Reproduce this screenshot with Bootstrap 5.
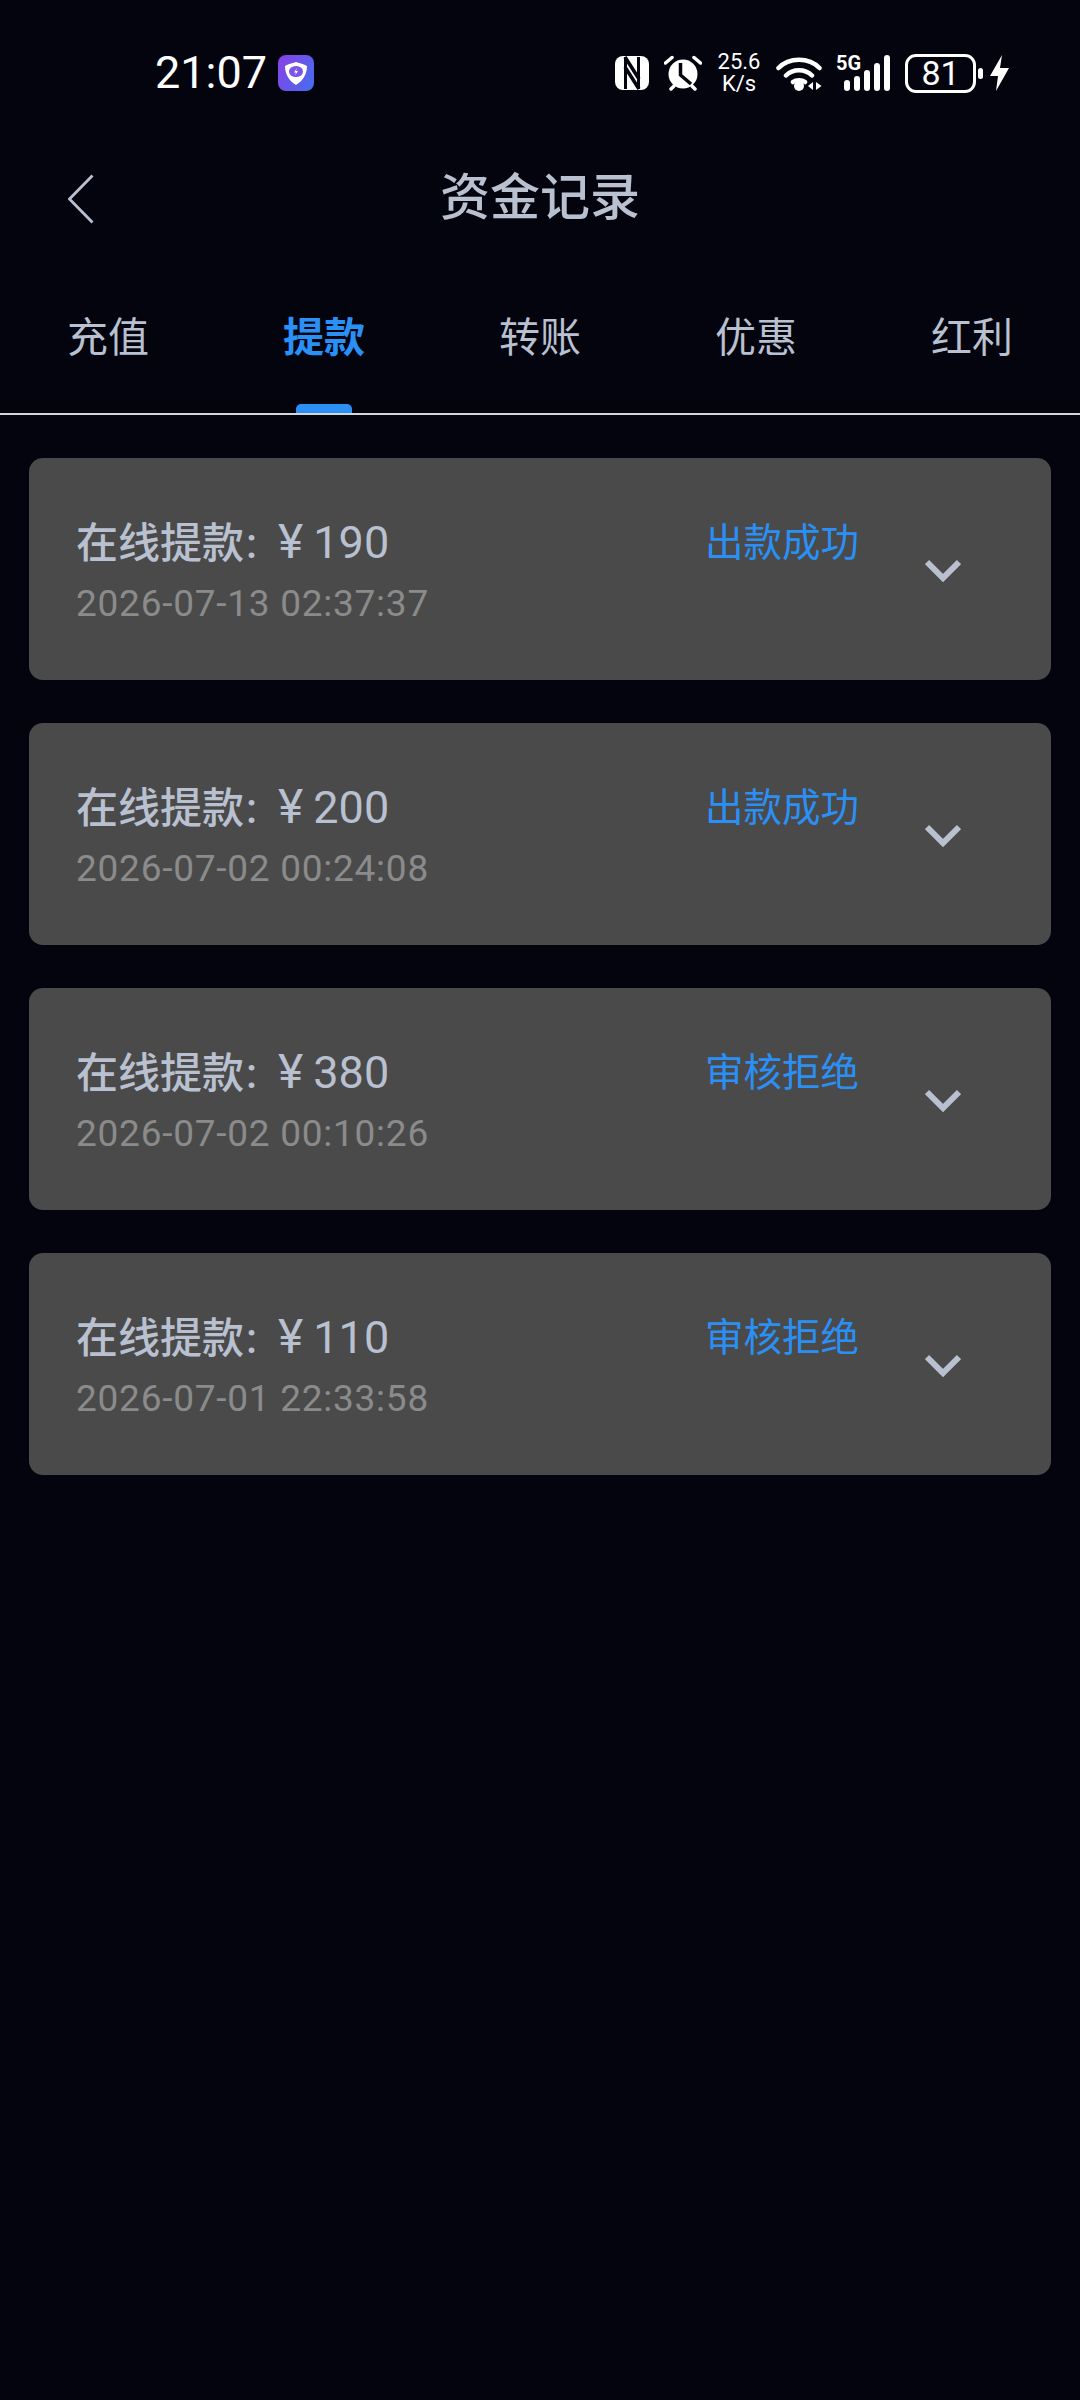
<!DOCTYPE html>
<html lang="zh-CN">
<head>
  <meta charset="UTF-8">
  <meta name="viewport" content="width=device-width, initial-scale=1.0">
  <title>资金记录</title>
  <link rel="stylesheet" href="https://cdn.jsdelivr.net/npm/bootstrap@5.3.2/dist/css/bootstrap.min.css">
  <style>
    body { background: #03040e; font-family: Roboto, "Noto Sans CJK SC", sans-serif; color: #b9c0d0; min-height: 2400px; }
    .status-bar { height: 146px; padding: 0 71px 0 155px; color: #fff; }
    .status-time { font-size: 45px; line-height: 52px; margin-right: 11px; }
    .app-badge { width: 36px; height: 36px; border-radius: 8px; background: linear-gradient(120deg, #8b3fe6, #4270ee); }
    .speed { width: 46px; font-size: 22px; line-height: 22px; text-align: center; white-space: nowrap; }
    .signal-5g { left: 0; top: -3px; font-size: 20px; line-height: 22px; font-weight: 700; }
    .batt { width: 71px; height: 39px; border: 3px solid #fff; border-radius: 11px; font-size: 34px; line-height: 1; }
    .batt-tip { width: 5px; height: 11px; background: #fff; border-radius: 3px; margin-left: 2px; }
    .top-nav { height: 104px; }
    .nav-title { font-size: 50px; font-weight: 500; line-height: 60px; }
    .tabs { height: 165px; border-bottom: 2px solid #d4d6dc; }
    .tab-item { width: 216px; padding-top: 60px; font-size: 41px; line-height: 56px; }
    .tab-item.active { color: #2a90f5; font-weight: 700; }
    .tab-bar { width: 56px; height: 9px; margin-top: 38px; border-radius: 5px 5px 0 0; background: #2a90f5; }
    .records { padding: 43px 29px 0 29px; gap: 43px; }
    .record { height: 222px; padding: 57px 0 0 47px; background: #4a4a4a; border-radius: 14px; }
    .rec-title { font-size: 42px; font-weight: 500; line-height: 56px; white-space: nowrap; }
    .rec-title .colon { margin: 0 21px 0 2px; }
    .rec-title .yen { font-size: 48px; font-weight: 400; line-height: 1; margin-right: 10px; }
    .rec-title .amt { font-size: 45px; font-weight: 400; }
    .rec-date { font-size: 37px; line-height: 44px; margin-top: 10px; color: #8b8b8b; letter-spacing: .75px; }
    .rec-status { width: 152px; margin-right: 68px; font-size: 38.500px; line-height: 56px; color: #2a90f5; white-space: nowrap; }
    .rec-arrow { width: 36px; margin-right: 90px; padding-top: 43px; }
  </style>
</head>
<body>
  <!-- Status bar -->
  <div class="status-bar d-flex align-items-center">
    <span class="status-time">21:07</span>
    <span class="app-badge d-flex align-items-center justify-content-center">
      <svg width="24" height="25" viewBox="0 0 24 25" fill="none"><path d="M12 1C16 2.500 20 3 23 5C23 13 19 20 12 24C5 20 1 13 1 5C4 3 8 2.500 12 1Z" fill="#fff"/><ellipse cx="12" cy="10.500" rx="7" ry="5.500" fill="#7a55e8"/><path d="M13 7L10 11.500H12L11 14.500L14 10H12Z" fill="#fff"/></svg>
    </span>
    <div class="ms-auto d-flex align-items-center">
      <!-- NFC -->
      <svg width="34" height="34" viewBox="0 0 34 34" style="margin-right:15px"><rect width="34" height="34" rx="8" fill="#fff"/><path d="M10.500 1V33M23.500 1V33" stroke="#03040e" stroke-width="3" fill="none"/><path d="M10 1L24 23M10 11L24 33" stroke="#03040e" stroke-width="3.500" fill="none"/></svg>
      <!-- alarm -->
      <svg width="38" height="36" viewBox="0 0 38 36" style="margin-right:14px"><circle cx="19" cy="19" r="14.500" fill="#fff"/><path d="M1.500 8L8 2.500M36.500 8L30 2.500M7 34L10 31M31 34L28 31" stroke="#fff" stroke-width="3.500" stroke-linecap="round"/><path d="M16.500 8V20L27 29" stroke="#03040e" stroke-width="3.500" fill="none"/></svg>
      <div class="speed" style="margin-right:14px"><div>25.6</div><div>K/s</div></div>
      <!-- wifi -->
      <svg width="46" height="36" viewBox="0 0 46 36" style="margin-right:14px"><path d="M2.500 13C13 2 33 2 43.500 13M10 20.500C17 13.500 29 13.500 36 20.500M17 27C20 24.500 26 24.500 29 27" stroke="#fff" stroke-width="4.500" fill="none" stroke-linecap="round"/><circle cx="23" cy="31" r="5" fill="#fff"/><path d="M37 27V35L32 31ZM40 27V35L45.500 31Z" fill="#fff"/></svg>
      <!-- 5G + signal -->
      <div class="position-relative" style="margin-right:15px">
        <svg class="d-block" width="54" height="36" viewBox="0 0 54 36"><g fill="#fff"><rect x="8" y="25" width="6" height="11" rx="3"/><rect x="18" y="21" width="6" height="15" rx="3"/><rect x="28" y="15" width="6" height="21" rx="3"/><rect x="38" y="8" width="6" height="28" rx="3"/><rect x="48" y="0" width="6" height="36" rx="3"/></g></svg>
        <span class="signal-5g position-absolute">5G</span>
      </div>
      <div class="batt d-flex align-items-center justify-content-center">81</div>
      <span class="batt-tip"></span>
      <svg width="19" height="36" viewBox="0 0 19 36" style="margin-left:7px"><path d="M12 0L0 21H8L6 36L19 13H10Z" fill="#fff"/></svg>
    </div>
  </div>

  <!-- Title -->
  <div class="top-nav position-relative d-flex align-items-center justify-content-center">
    <svg class="position-absolute top-50 translate-middle-y" style="left:68px; margin-top:1px" width="26" height="50" viewBox="0 0 26 50" fill="none"><path d="M24.500 1.500L1.500 25L24.500 48.500" stroke="#b9c0d0" stroke-width="2.800"/></svg>
    <span class="nav-title">资金记录</span>
  </div>

  <!-- Tabs -->
  <div class="tabs d-flex">
    <div class="tab-item d-flex flex-column align-items-center"><span>充值</span></div>
    <div class="tab-item active d-flex flex-column align-items-center"><span>提款</span><span class="tab-bar"></span></div>
    <div class="tab-item d-flex flex-column align-items-center"><span>转账</span></div>
    <div class="tab-item d-flex flex-column align-items-center"><span>优惠</span></div>
    <div class="tab-item d-flex flex-column align-items-center"><span>红利</span></div>
  </div>

  <div id="record-list" class="records d-flex flex-column"></div>

  <script src="https://cdn.jsdelivr.net/npm/bootstrap@5.3.2/dist/js/bootstrap.bundle.min.js"></script>
  <script>
    const records = [
      { amount: 190, date: '2026-07-13 02:37:37', status: '出款成功' },
      { amount: 200, date: '2026-07-02 00:24:08', status: '出款成功' },
      { amount: 380, date: '2026-07-02 00:10:26', status: '审核拒绝' },
      { amount: 110, date: '2026-07-01 22:33:58', status: '审核拒绝' }
    ];
    const list = document.getElementById('record-list');
    records.forEach(r => {
      list.innerHTML += `
        <div class="record d-flex">
          <div class="flex-grow-1">
            <div class="rec-title">在线提款<span class="colon">:</span><span class="yen">¥</span><span class="amt">${r.amount}</span></div>
            <div class="rec-date">${r.date}</div>
          </div>
          <div class="rec-status">${r.status}</div>
          <div class="rec-arrow">
            <svg width="36" height="23" viewBox="0 0 36 23" fill="none"><path d="M2 3L18 19L34 3" stroke="#b9c0d0" stroke-width="6"/></svg>
          </div>
        </div>`;
    });
  </script>
</body>
</html>
